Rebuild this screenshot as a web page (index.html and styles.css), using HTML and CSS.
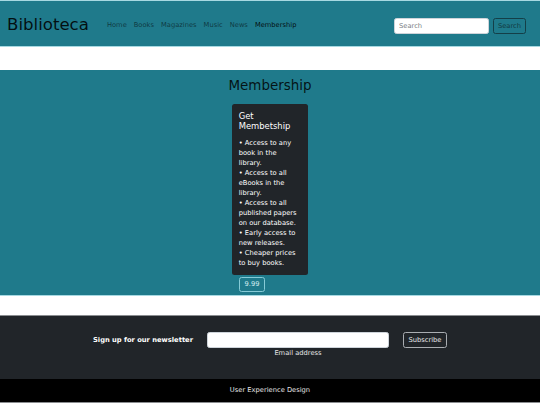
FILE: index.html
```html
<!DOCTYPE html>
<html lang="en">
<head>
<meta charset="utf-8">
<title>Biblioteca</title>
<link rel="stylesheet" href="styles.css">
</head>
<body>
<header class="navbar">
  <a class="brand" href="#">Biblioteca</a>
  <ul class="nav">
    <li><a class="nav-link" href="#">Home</a></li>
    <li><a class="nav-link" href="#">Books</a></li>
    <li><a class="nav-link" href="#">Magazines</a></li>
    <li><a class="nav-link" href="#">Music</a></li>
    <li><a class="nav-link" href="#">News</a></li>
    <li><a class="nav-link active" href="#">Membership</a></li>
  </ul>
  <form class="search">
    <input class="search-input" type="text" placeholder="Search">
    <button class="search-btn" type="button">Search</button>
  </form>
</header>

<main class="membership">
  <h2 class="title">Membership</h2>
  <div class="plan">
    <div class="card">
      <h5 class="card-title">Get Membetship</h5>
      <p class="card-text">• Access to any book in the library.<br>• Access to all eBooks in the library.<br>• Access to all published papers on our database.<br>• Early access to new releases.<br>• Cheaper prices to buy books.</p>
    </div>
    <button class="price-btn" type="button">9.99</button>
  </div>
</main>

<footer class="newsletter">
  <span class="signup">Sign up for our newsletter</span>
  <div class="email-group">
    <input class="email-input" type="email">
    <span class="email-label">Email address</span>
  </div>
  <button class="subscribe-btn" type="button">Subscribe</button>
</footer>

<div class="credits">User Experience Design</div>
</body>
</html>
```

FILE: styles.css
```css
html {
  font-size: 6.72px;
}
* {
  box-sizing: border-box;
}
body {
  margin: 0;
  font-family: "DejaVu Sans", Verdana, sans-serif;
  font-size: 1rem;
  line-height: 1.5;
  color: #212529;
  background: #fff;
}
.navbar {
  display: flex;
  align-items: center;
  height: 47px;
  padding: 4px 14px 0 7px;
  background: #1f7a8b;
  border-top: 1px solid #a7d9e2;
  border-bottom: 1px solid #a7d9e2;
}
.brand {
  font-size: 16.6px;
  line-height: 1.5;
  color: rgba(0, 0, 0, 0.88);
  text-decoration: none;
  margin-right: 18px;
  margin-top: -1px;
}
.nav {
  display: flex;
  gap: 7px;
  list-style: none;
  margin: 0;
  padding: 0;
}
.nav-link {
  color: rgba(0, 0, 0, 0.55);
  text-decoration: none;
}
.nav-link.active {
  color: rgba(0, 0, 0, 0.9);
}
.search {
  display: flex;
  gap: 4px;
  margin-left: auto;
}
.search-input {
  width: 95px;
  height: 16px;
  padding: 0 4px;
  border: 1px solid #ced4da;
  border-radius: 2.5px;
  font-family: inherit;
  font-size: 1rem;
  background: #fff;
}
.search-input::placeholder {
  color: #7a7f85;
}
.search-btn {
  width: 33px;
  height: 16px;
  padding: 0;
  border: 1px solid #143f48;
  border-radius: 2.5px;
  background: transparent;
  font-family: inherit;
  font-size: 1rem;
  color: #123a42;
}
.membership {
  margin-top: 23px;
  padding: 8px 0 3px;
  background: #1f7a8b;
  border-bottom: 1px solid #a7d9e2;
  display: flex;
  flex-direction: column;
  align-items: center;
}
.title {
  margin: 0 0 10px;
  font-size: 2rem;
  font-weight: 400;
  line-height: 1.2;
  color: rgba(0, 0, 0, 0.85);
}
.plan {
  width: 76px;
  display: flex;
  flex-direction: column;
  align-items: flex-start;
}
.card {
  width: 100%;
  background: #212529;
  color: #fff;
  border-radius: 2.5px;
  padding: 1rem;
}
.card-title {
  margin: 0 0 7px;
  font-size: 1.25rem;
  font-weight: 400;
  line-height: 1.2;
}
.card-text {
  margin: 0;
  line-height: 10px;
}
.price-btn {
  margin: 2px 0 0 7px;
  width: 26px;
  height: 15px;
  padding: 0;
  border: 1px solid #86cbd7;
  border-radius: 2.5px;
  background: transparent;
  font-family: inherit;
  font-size: 1rem;
  color: #d5eff3;
}
.newsletter {
  margin-top: 19px;
  border-top: 1px solid #8a8d90;
  background: #212529;
  display: flex;
  justify-content: center;
  align-items: flex-start;
  gap: 14px;
  padding: 16px 0 21px;
}
.signup {
  font-weight: 700;
  color: #fff;
  line-height: 16px;
}
.email-group {
  display: flex;
  flex-direction: column;
  align-items: center;
}
.email-input {
  width: 182px;
  height: 16px;
  border: 1px solid #ced4da;
  border-radius: 2.5px;
  background: #fff;
}
.email-label {
  color: #e6e6e6;
  line-height: 10px;
}
.subscribe-btn {
  width: 44px;
  height: 16px;
  padding: 0;
  border: 1px solid #a9adb1;
  border-radius: 2.5px;
  background: transparent;
  font-family: inherit;
  font-size: 1rem;
  color: #e4e6e8;
}
.credits {
  background: #000;
  color: #e6e6e6;
  text-align: center;
  height: 24px;
  line-height: 23px;
  border-bottom: 1px solid #8a8d90;
}
```
